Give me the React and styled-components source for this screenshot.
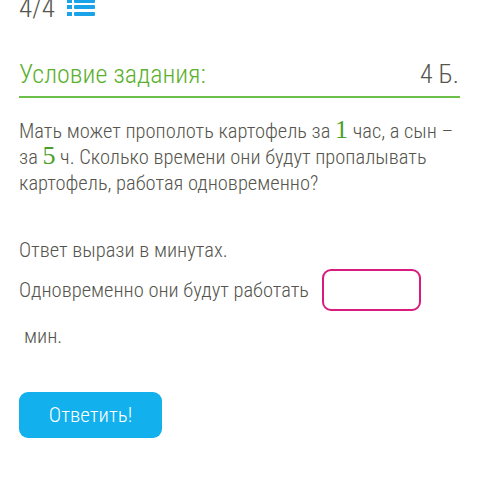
import styled, { createGlobalStyle } from "styled-components";

const GlobalStyle = createGlobalStyle`
  html, body {
    margin: 0;
    padding: 0;
    background: #ffffff;
  }
  body {
    font-family: Roboto, "Noto Sans", sans-serif;
    font-weight: 300;
    font-stretch: condensed;
    color: #55554d;
  }
`;

const Page = styled.div`
  width: 479px;
  height: 480px;
  overflow: hidden;
  padding: 0 19px;
  box-sizing: border-box;
`;

const Counter = styled.div`
  display: flex;
  align-items: center;
  gap: 12px;
  margin-top: -8px;
  height: 32px;
  line-height: 32px;
  font-size: 27px;
`;

const TaskHead = styled.div`
  display: flex;
  justify-content: space-between;
  align-items: baseline;
  margin-top: 34px;
  padding-bottom: 6px;
  border-bottom: 2px solid #6cc04a;
`;

const TaskTitle = styled.h2`
  margin: 0;
  font-size: 26px;
  line-height: 32px;
  font-weight: 300;
  color: #5cb030;
`;

const Points = styled.span`
  font-size: 26px;
  margin-right: 1px;
`;

const Text = styled.p`
  margin: ${(p) => p.$mt || 0}px 0 0;
  font-size: 20.5px;
  line-height: 26px;
`;

const Num = styled.span`
  font-family: "Liberation Serif", serif;
  font-weight: 400;
  font-size: 26px;
  line-height: 0;
  color: #4aa02a;
`;

const AnswerRow = styled.div`
  display: flex;
  align-items: center;
  gap: 13px;
  margin-top: 6px;
  font-size: 20.5px;
  line-height: 26px;
`;

const AnswerBox = styled.input`
  width: 99px;
  height: 42px;
  box-sizing: border-box;
  border: 2px solid #d81b7c;
  border-radius: 9px;
  outline: none;
  background: #fff;
`;

const Unit = styled.div`
  margin-top: 12px;
  padding-left: 5px;
  font-size: 20.5px;
  line-height: 26px;
`;

const SubmitButton = styled.button`
  display: block;
  margin-top: 43px;
  width: 143px;
  height: 46px;
  border: none;
  border-radius: 9px;
  background: #12b0ec;
  color: #ffffff;
  font-family: Roboto, sans-serif;
  font-weight: 300;
  font-stretch: condensed;
  font-size: 21px;
`;

function ListIcon() {
  return (
    <svg width="28" height="20" viewBox="0 0 28 20">
      <g fill="#1aa3e8">
        <rect x="0" y="1" width="5" height="4" />
        <rect x="7" y="1" width="21" height="4" rx="1" />
        <rect x="0" y="7" width="5" height="4" />
        <rect x="7" y="7" width="21" height="4" rx="1" />
        <rect x="0" y="14" width="5" height="4" />
        <rect x="7" y="14" width="21" height="4" rx="1" />
      </g>
    </svg>
  );
}

export default function App() {
  return (
    <>
      <GlobalStyle />
      <Page>
        <Counter>
          <span>4/4</span>
          <ListIcon />
        </Counter>
        <TaskHead>
          <TaskTitle>Условие задания:</TaskTitle>
          <Points>4 Б.</Points>
        </TaskHead>
        <Text $mt={20}>
          Мать может прополоть картофель за <Num>1</Num> час, а сын –
          за <Num>5</Num> ч. Сколько времени они будут пропалывать
          картофель, работая одновременно?
        </Text>
        <Text $mt={41}>Ответ вырази в минутах.</Text>
        <AnswerRow>
          <span>Одновременно они будут работать</span>
          <AnswerBox />
        </AnswerRow>
        <Unit>мин.</Unit>
        <SubmitButton>Ответить!</SubmitButton>
      </Page>
    </>
  );
}
